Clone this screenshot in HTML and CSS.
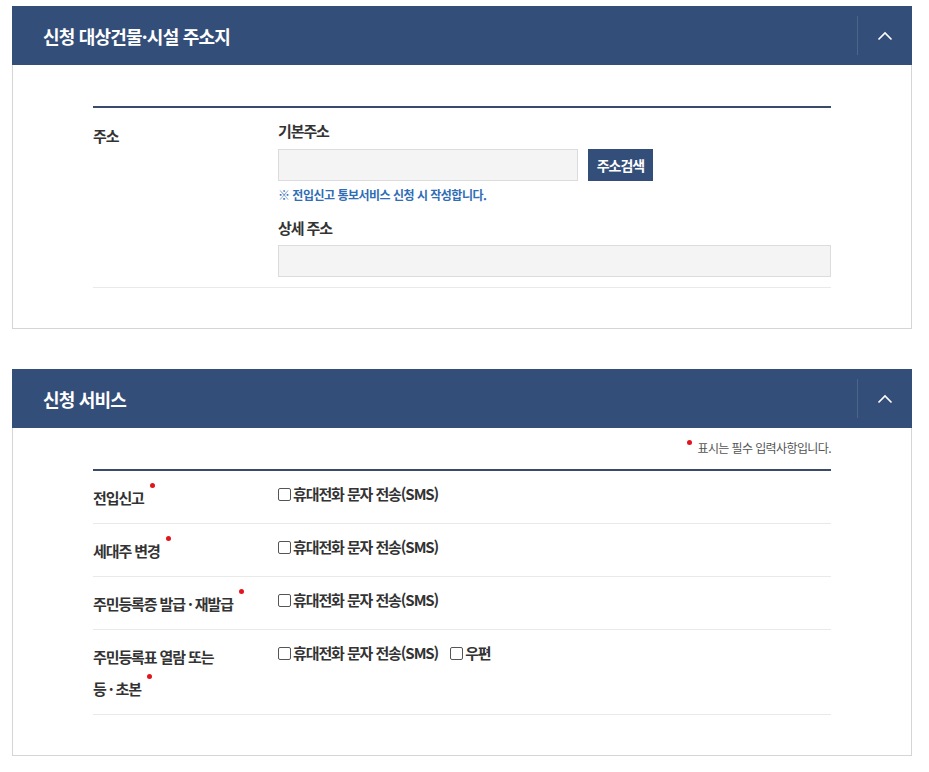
FILE: index.html
```html
<!DOCTYPE html>
<html lang="ko">

<head>
  <meta charset="UTF-8">
  <title>신청 대상건물·시설 주소지</title>
  <link rel="stylesheet" href="styles.css">
</head>

<body>
  <div class="wrap">

    <!-- 주소지 -->
    <section class="panel">
      <div class="panel-head">
        <h2 class="panel-title">신청 대상건물·시설 주소지</h2>
        <button type="button" class="toggle" aria-label="접기">
          <svg width="16" height="10" viewBox="0 0 16 10"><path d="M1.5 8.5 L8 2 L14.5 8.5" fill="none" stroke="#fff" stroke-width="1.6"/></svg>
        </button>
      </div>
      <div class="panel-body">
        <div class="form-table">
          <div class="row">
            <div class="label addr-label">주소</div>
            <div class="field">
              <div class="field-label">기본주소</div>
              <div class="addr-line">
                <input type="text" class="input input-base">
                <button type="button" class="btn-search">주소검색</button>
              </div>
              <p class="help">※ 전입신고 통보서비스 신청 시 작성합니다.</p>
              <div class="field-label second">상세 주소</div>
              <input type="text" class="input input-full">
            </div>
          </div>
        </div>
      </div>
    </section>

    <!-- 신청 서비스 -->
    <section class="panel">
      <div class="panel-head">
        <h2 class="panel-title">신청 서비스</h2>
        <button type="button" class="toggle" aria-label="접기">
          <svg width="16" height="10" viewBox="0 0 16 10"><path d="M1.5 8.5 L8 2 L14.5 8.5" fill="none" stroke="#fff" stroke-width="1.6"/></svg>
        </button>
      </div>
      <div class="panel-body service-body">
        <p class="req-note"><span class="dot"></span>표시는 필수 입력사항입니다.</p>
        <div class="form-table">
          <div class="row">
            <div class="label"><span class="req">전입신고</span></div>
            <div class="field checks">
              <label class="check"><input type="checkbox">휴대전화 문자 전송(SMS)</label>
            </div>
          </div>
          <div class="row">
            <div class="label"><span class="req">세대주 변경</span></div>
            <div class="field checks">
              <label class="check"><input type="checkbox">휴대전화 문자 전송(SMS)</label>
            </div>
          </div>
          <div class="row">
            <div class="label"><span class="req">주민등록증 <span class="nowrap">발급<span class="mid">·</span>재발급</span></span></div>
            <div class="field checks">
              <label class="check"><input type="checkbox">휴대전화 문자 전송(SMS)</label>
            </div>
          </div>
          <div class="row">
            <div class="label"><span class="req">주민등록표 열람 또는 <span class="nowrap">등<span class="mid">·</span>초본</span></span></div>
            <div class="field checks">
              <label class="check"><input type="checkbox">휴대전화 문자 전송(SMS)</label>
              <label class="check"><input type="checkbox">우편</label>
            </div>
          </div>
        </div>
      </div>
    </section>

  </div>
</body>

</html>
```

FILE: styles.css
```css
body {
  margin: 0;
  padding: 0;
  background: #fff;
  color: #333;
  font-family: "Noto Sans CJK KR", "Noto Sans", sans-serif;
}

.wrap {
  width: 900px;
  margin-left: 12px;
  padding-top: 6px;
}

.panel {
  margin-bottom: 40px;
}

.panel-head {
  display: flex;
  align-items: center;
  height: 59px;
  background: #344e7a;
}

.panel-title {
  flex: 1;
  margin: 0;
  padding-left: 31px;
  color: #fff;
  font-size: 18px;
  font-weight: 700;
  letter-spacing: -0.8px;
  line-height: 24px;
}

.toggle {
  display: flex;
  align-items: center;
  justify-content: center;
  width: 55px;
  height: 39px;
  padding: 0;
  background: none;
  border: none;
  border-left: 1px solid rgba(255, 255, 255, 0.13);
  cursor: pointer;
}

.panel-body {
  padding: 41px 80px 40px 80px;
  border: 1px solid #d5d5d5;
  border-top: none;
}

.service-body {
  padding-top: 10px;
}

.form-table {
  border-top: 2px solid #3a4a68;
}

.row {
  display: flex;
  border-bottom: 1px solid #e9e9e9;
}

.label {
  width: 165px;
  flex-shrink: 0;
  padding: 11px 20px 9px 0;
  font-size: 15px;
  font-weight: 700;
  letter-spacing: -1.1px;
  line-height: 32px;
  color: #333;
  word-break: keep-all;
}

.addr-label {
  padding-top: 16px;
  line-height: 24px;
}

.nowrap {
  white-space: nowrap;
}

.mid {
  margin: 0 3px;
}

.req::after {
  content: "";
  display: inline-block;
  width: 5px;
  height: 5px;
  margin-left: 6px;
  border-radius: 50%;
  background: #e3141b;
  vertical-align: 16px;
}

.field {
  flex: 1;
  padding: 11px 0 10px;
}

.field-label {
  font-size: 15px;
  font-weight: 700;
  letter-spacing: -1.1px;
  line-height: 24px;
  margin-bottom: 6px;
  color: #333;
}

.field-label.second {
  margin-top: 11px;
  margin-bottom: 5px;
}

.addr-line {
  display: flex;
  gap: 10px;
}

.input {
  display: block;
  box-sizing: border-box;
  height: 32px;
  margin: 0;
  background: #f4f4f4;
  border: 1px solid #dcdcdc;
  font-size: 14px;
}

.input-base {
  width: 300px;
}

.input-full {
  width: 100%;
}

.btn-search {
  width: 65px;
  height: 32px;
  padding: 0;
  background: #344e7a;
  border: none;
  color: #fff;
  font-family: inherit;
  font-size: 14px;
  font-weight: 700;
  letter-spacing: -1px;
}

.help {
  margin: 4px 0 0;
  font-size: 12px;
  font-weight: 700;
  letter-spacing: -0.5px;
  line-height: 20px;
  color: #2f6db5;
}

.req-note {
  display: flex;
  justify-content: flex-end;
  align-items: center;
  margin: 0 0 11px;
  font-size: 12px;
  letter-spacing: -0.6px;
  line-height: 20px;
  color: #555;
}

.dot {
  width: 5px;
  height: 5px;
  margin: 0 5px 12px 0;
  border-radius: 50%;
  background: #e3141b;
}

.checks {
  display: flex;
  align-items: flex-start;
  gap: 12px;
  padding-top: 10px;
}

.check {
  display: flex;
  align-items: center;
  gap: 2px;
  font-size: 15px;
  font-weight: 700;
  letter-spacing: -1.1px;
  line-height: 26px;
  color: #333;
}

.check input {
  appearance: none;
  width: 13px;
  height: 13px;
  margin: 0;
  border: 1px solid #555;
  border-radius: 2px;
  background: #fff;
}
```
